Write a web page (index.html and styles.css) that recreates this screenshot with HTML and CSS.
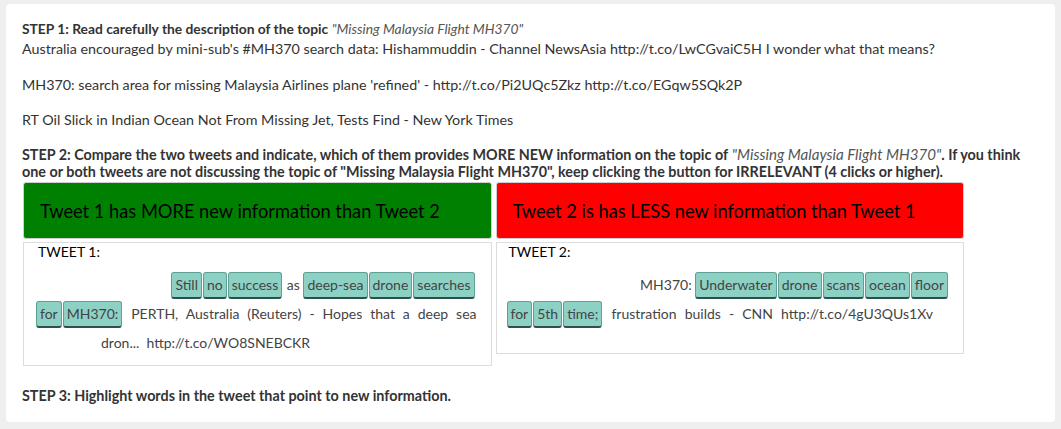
FILE: index.html
```html
<!DOCTYPE html>
<html>
<head>
<meta charset="utf-8">
<link rel="stylesheet" href="styles.css">
</head>
<body>
<div class="card">
  <div class="step1">
    <div class="step-title"><b>STEP 1: Read carefully the description of the topic</b> <i class="topic">"Missing Malaysia Flight MH370"</i></div>
    <p class="desc">Australia encouraged by mini-sub's #MH370 search data: Hishammuddin - Channel NewsAsia http://t.co/LwCGvaiC5H I wonder what that means?</p>
    <p class="desc">MH370: search area for missing Malaysia Airlines plane 'refined' - http://t.co/Pi2UQc5Zkz http://t.co/EGqw5SQk2P</p>
    <p class="desc">RT Oil Slick in Indian Ocean Not From Missing Jet, Tests Find - New York Times</p>
  </div>
  <div class="step2"><b>STEP 2: Compare the two tweets and indicate, which of them provides MORE NEW information on the topic of</b> <i class="topic topic2">"Missing Malaysia Flight MH370"</i><b>. If you think one or both tweets are not discussing the topic of "Missing Malaysia Flight MH370", keep clicking the button for IRRELEVANT (4 clicks or higher).</b></div>
  <div class="compare">
    <div class="col">
      <button class="choice green">Tweet 1 has MORE new information than Tweet 2</button>
      <div class="tweet t1">
        <div class="label">TWEET 1:</div>
        <div class="line l-right"><span class="chip">Still</span><span class="chip">no</span><span class="chip">success</span> as <span class="chip">deep-sea</span><span class="chip">drone</span><span class="chip">searches</span></div>
        <div class="line l-just"><span class="chip">for</span><span class="chip">MH370:</span> PERTH, Australia (Reuters) - Hopes that a deep sea</div>
        <div class="line l-tail">dron...&nbsp; http://t.co/WO8SNEBCKR</div>
      </div>
    </div>
    <div class="col">
      <button class="choice red">Tweet 2 is has LESS new information than Tweet 1</button>
      <div class="tweet t2">
        <div class="label">TWEET 2:</div>
        <div class="line l-right r2">MH370: <span class="chip">Underwater</span><span class="chip">drone</span><span class="chip">scans</span><span class="chip">ocean</span><span class="chip">floor</span></div>
        <div class="line l-left"><span class="chip">for</span><span class="chip">5th</span><span class="chip">time;</span><span class="spaced"> frustration builds - CNN http://t.co/4gU3QUs1Xv</span></div>
      </div>
    </div>
  </div>
  <div class="step3"><b>STEP 3: Highlight words in the tweet that point to new information.</b></div>
</div>
</body>
</html>
```
FILE: styles.css
```css
html, body {
  margin: 0;
  padding: 0;
}
body {
  background: #efefef;
  font-family: Lato, "Open Sans", sans-serif;
  font-size: 14px;
  color: #333;
  line-height: 20px;
}
.card {
  margin: 4px 6px 0 6px;
  width: 1049px;
  height: 418px;
  box-sizing: border-box;
  background: #fff;
  border-radius: 4px;
  padding: 15px 16px 0 16px;
}
b {
  font-weight: 700;
}
.topic {
  color: #555;
  font-weight: 400;
}
.topic2 {
  font-size: 15.1px;
}
.step-title {
  font-size: 13.8px;
}
.desc {
  margin: 0 0 15.5px 0;
  font-size: 14.3px;
}
.step2 {
  font-size: 14.35px;
  line-height: 17px;
  margin-top: 3px;
}
.compare {
  display: flex;
  gap: 4px;
  width: 941px;
  margin-left: 1px;
  margin-top: 2.5px;
  align-items: flex-start;
}
.col {
  flex: 1;
  display: flex;
  flex-direction: column;
  gap: 3px;
}
.choice {
  height: 57px;
  border: 1px solid #cfcfcf;
  border-radius: 3px;
  font-family: Lato, "Open Sans", sans-serif;
  font-size: 18.25px;
  color: #000;
  text-align: left;
  padding: 0 0 0 16px;
  cursor: pointer;
}
.green { background: #008000; }
.red { background: #ff0000; }
.tweet {
  border: 1px solid #ddd;
  padding: 0 14px 0 12px;
  color: #444;
}
.t1 { height: 122px; }
.t2 { height: 110px; padding-left: 10px; }
.label {
  color: #000;
  padding-left: 2px;
  line-height: 16px;
  margin-top: 1px;
}
.line {
  line-height: 29px;
  white-space: nowrap;
}
.l-right {
  text-align: right;
  padding-right: 1px;
  margin-top: 9.5px;
}
.r2 {
  padding-right: 0;
}
.l-just {
  text-align: justify;
  text-align-last: justify;
  white-space: normal;
}
.l-tail {
  padding-left: 65px;
}
.l-left {
  text-align: left;
}
.spaced {
  word-spacing: 4.5px;
}
.chip {
  display: inline-block;
  background: #8dd1c4;
  border: 1px solid #5fa094;
  border-bottom: 2px solid #2f4f49;
  border-radius: 3px;
  padding: 0 3px;
  line-height: 24px;
  color: #444;
  margin-right: 1px;
}
.step3 {
  margin-top: 20px;
  font-size: 14.35px;
}
```
